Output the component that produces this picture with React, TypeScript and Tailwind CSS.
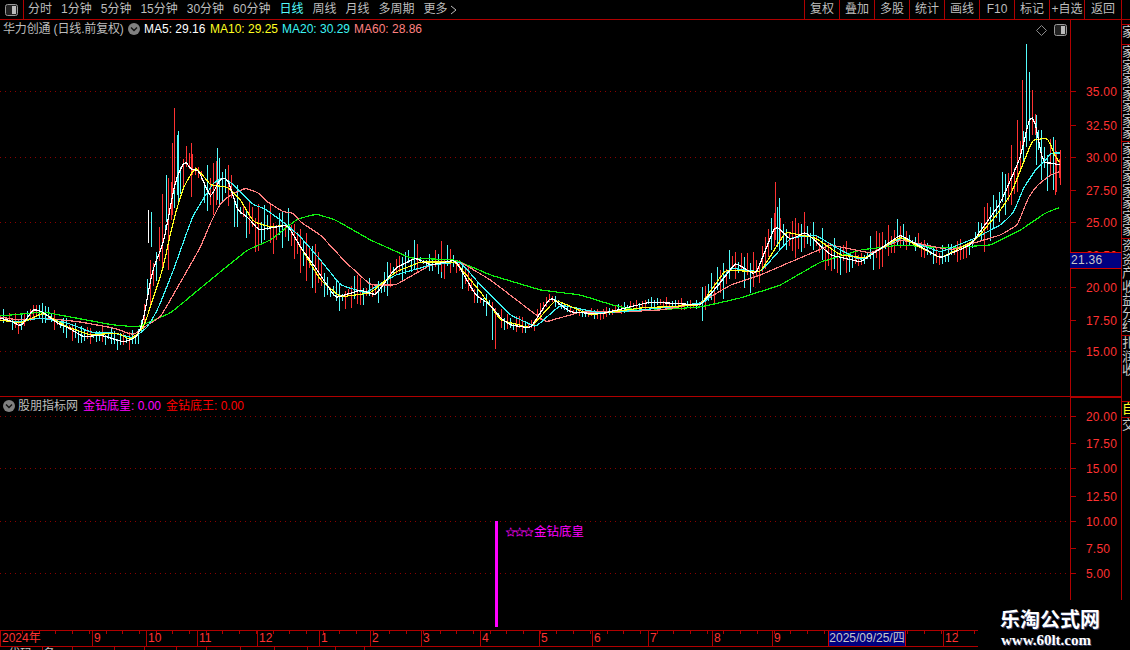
import React from 'react';

const FONT = 'font-["Liberation_Sans","Noto_Sans_CJK_SC",sans-serif]';

type Pt = [number, number];

const WHITE: Pt[] = [[0,318],[13,322],[20,327],[33,309],[42,312],[57,323],[70,329],[83,337],[100,335],[123,342],[137,337],[143,320],[150,280],[152,270],[163,243],[175,180],[185,159],[190,170],[198,170],[210,198],[220,178],[227,178],[237,210],[248,218],[258,230],[287,225],[300,247],[318,272],[335,298],[360,290],[375,295],[395,268],[415,258],[430,265],[455,260],[475,295],[490,305],[500,318],[510,325],[530,328],[550,297],[570,312],[600,314],[650,302],[700,305],[718,285],[735,263],[755,275],[775,225],[790,240],[805,232],[830,255],[860,262],[900,235],[940,258],[970,245],[1000,203],[1010,180],[1020,157],[1030,113],[1035,123],[1042,163],[1050,163],[1060,165]];
const YELLOW: Pt[] = [[0,320],[20,323],[43,313],[67,327],[90,335],[117,333],[130,340],[143,328],[152,300],[162,270],[173,220],[183,187],[195,167],[202,175],[210,185],[227,187],[240,200],[253,222],[270,227],[287,225],[300,247],[320,280],[340,297],[370,293],[395,272],[420,262],[455,262],[480,292],[500,320],[530,328],[555,300],[590,315],[640,308],[700,305],[725,270],[760,272],[785,232],[815,238],[840,255],[865,258],[900,237],[940,258],[975,240],[1000,210],[1010,195],[1020,170],[1032,140],[1048,138],[1053,153],[1060,165]];
const CYAN: Pt[] = [[0,320],[17,322],[40,318],[67,323],[93,333],[113,333],[133,338],[147,327],[157,310],[173,270],[180,250],[192,217],[202,200],[213,183],[223,177],[233,185],[243,195],[253,205],[263,208],[280,220],[290,228],[300,237],[320,260],[340,285],[365,293],[395,275],[430,265],[460,262],[480,285],[510,315],[535,327],[560,305],[600,313],[640,310],[680,306],[705,302],[730,268],[760,272],[790,238],[815,235],[840,250],[860,260],[900,238],[940,252],[975,238],[1000,225],[1013,213],[1023,188],[1037,167],[1043,163],[1050,153],[1060,153]];
const PINK: Pt[] = [[0,317],[17,320],[43,318],[80,322],[113,328],[133,335],[147,325],[160,317],[187,270],[200,247],[210,223],[220,203],[230,195],[245,188],[258,193],[267,202],[283,212],[293,213],[300,222],[320,235],[345,262],[370,285],[395,285],[430,265],[460,262],[490,280],[520,303],[545,322],[580,312],[620,312],[660,310],[700,303],[730,285],[760,275],[790,262],[830,245],[870,253],[900,240],[950,250],[1000,235],[1017,225],[1028,197],[1037,185],[1050,175],[1060,171]];
const GREEN: Pt[] = [[0,316],[43,312],[113,325],[137,327],[170,313],[222,270],[247,250],[270,240],[297,219],[316,214],[335,220],[370,240],[410,258],[455,260],[490,275],[540,290],[580,295],[612,305],[640,311],[700,307],[740,298],[780,285],[820,262],[860,250],[900,245],[945,248],[990,245],[1020,230],[1045,213],[1060,207]];

// hand-read wicks that stick out of the generated ones
const SPIKES: [number, number, number, string][] = [
  [174,108,190,'#ff3232'],[178,131,205,'#54fcfc'],[172,143,215,'#ff3232'],[177,135,190,'#54fcfc'],
  [166,175,222,'#54fcfc'],[168,178,270,'#ff3232'],[162,194,270,'#ff3232'],[148,210,243,'#ffffff'],
  [151,212,247,'#54fcfc'],[191,143,197,'#ff3232'],[217,148,200,'#54fcfc'],[219,158,205,'#54fcfc'],
  [213,163,215,'#ff3232'],[1026,44,120,'#54fcfc'],[1022,80,150,'#ff3232'],[1029,72,135,'#54fcfc'],
  [1017,120,190,'#ff3232'],[775,182,240,'#ff3232'],[779,198,250,'#54fcfc'],[495,310,349,'#ff3232'],
  [492,308,340,'#54fcfc'],[1011,145,200,'#ff3232'],[1036,115,165,'#54fcfc'],[1041,130,180,'#54fcfc'],
  [1060,150,185,'#ff3232'],[1055,140,195,'#ff3232'],[414,240,270,'#54fcfc'],[441,241,272,'#ff3232'],
];

function sample(points: Pt[]) {
  const raw: Pt[] = [];
  let i = 0;
  for (let x = 0; x <= 1060; x += 3) {
    while (i < points.length - 2 && points[i + 1][0] < x) i++;
    const [x0, y0] = points[i];
    const [x1, y1] = points[i + 1];
    raw.push([x, y0 + ((y1 - y0) * (x - x0)) / (x1 - x0)]);
  }
  return raw.map(([x, y], k) => {
    const a = raw[Math.max(k - 1, 0)][1];
    const b = raw[Math.min(k + 1, raw.length - 1)][1];
    return [x, (a + y * 4 + b) / 6] as Pt;
  });
}

function toPath(points: Pt[]) {
  return sample(points).map(([x, y]) => `${x + 0.5},${y.toFixed(1)}`).join(' ');
}

function makeCandles() {
  let seed = 20240901;
  const rnd = () => {
    seed = (seed * 1664525 + 1013904223) % 4294967296;
    return seed / 4294967296;
  };
  const centre = sample(WHITE);
  return centre.map(([x, y]) => {
    let amp = 10;
    if (x > 145 && x < 320) amp = 26;
    else if (x > 320 && x < 490) amp = 16;
    else if (x > 540 && x < 700) amp = 5;
    else if (x > 700 && x < 900) amp = 20;
    else if (x >= 900 && x < 980) amp = 12;
    else if (x >= 980) amp = 28;
    const up = rnd() > 0.48;
    return {
      x,
      y1: y - amp * rnd() - 1,
      y2: y + amp * rnd() + 1,
      color: up ? '#ff3232' : '#54fcfc',
    };
  });
}

const CANDLES = makeCandles();

const UPPER_TICKS = [
  { y: 91, label: '35.00' }, { y: 125, label: '32.50' }, { y: 157, label: '30.00' }, { y: 190, label: '27.50' },
  { y: 222, label: '25.00' }, { y: 255, label: '22.50' }, { y: 287, label: '20.00' }, { y: 320, label: '17.50' }, { y: 351, label: '15.00' },
];
const LOWER_TICKS = [
  { y: 416, label: '20.00' }, { y: 443, label: '17.50' }, { y: 468, label: '15.00' }, { y: 496, label: '12.50' },
  { y: 521, label: '10.00' }, { y: 548, label: '7.50' }, { y: 573, label: '5.00' },
];
const MONTHS = [
  { x: 1, label: '2024年' }, { x: 93, label: '9' }, { x: 147, label: '10' }, { x: 198, label: '11' }, { x: 258, label: '12' },
  { x: 320, label: '1' }, { x: 371, label: '2' }, { x: 422, label: '3' }, { x: 481, label: '4' }, { x: 540, label: '5' },
  { x: 593, label: '6' }, { x: 649, label: '7' }, { x: 713, label: '8' }, { x: 773, label: '9' }, { x: 944, label: '12' },
];
const MINOR_TICKS = Array.from({ length: 58 }, (_, i) => 22 + i * 16.7);
const LEFT_TABS = ['分时', '1分钟', '5分钟', '15分钟', '30分钟', '60分钟', '日线', '周线', '月线', '多周期'];
const RIGHT_TABS = ['复权', '叠加', '多股', '统计', '画线', 'F10', '标记', '+自选'];
const STRIP = [
  { h: 'h-[5px]', text: '' },
  { h: 'h-[20px]', text: '家' },
  { h: 'h-[97px]', text: '家家家家家家家' },
  { h: 'h-[97px]', text: '家家家家家家家' },
  { h: 'h-[97px]', text: '资资产收益分红' },
  { h: 'h-[66px]', text: '扎润收' },
];

function PanelIcon() {
  return (
    <svg width="13" height="12" viewBox="0 0 13 12">
      <rect x="0.5" y="0.5" width="12" height="11" rx="2" fill="#222" stroke="#999" />
      <rect x="7" y="2" width="4" height="8" fill="#bbb" />
    </svg>
  );
}

function ChevronDot() {
  return (
    <svg width="12" height="12" viewBox="0 0 12 12" className="shrink-0">
      <circle cx="6" cy="6" r="6" fill="#808080" />
      <path d="M3 4.5 L6 7.5 L9 4.5" fill="none" stroke="#111" strokeWidth="1.4" />
    </svg>
  );
}

function Axis({ ticks, top }: { ticks: { y: number; label: string }[]; top: number }) {
  return (
    <div className="relative w-[52px] h-full border-l border-r border-[#b00000] shrink-0">
      {ticks.map((t) => (
        <div key={t.label} className="absolute left-0 flex items-center h-[14px]" style={{ top: t.y - top - 7 }}>
          <div className="w-[5px] h-px bg-[#b00000]" />
          <span className="ml-[10px] mt-[2px] text-[12px] leading-[14px] tracking-[0.2px] text-[#ff3232]">{t.label}</span>
        </div>
      ))}
    </div>
  );
}

function GridLines({ ys }: { ys: number[] }) {
  return (
    <>
      {ys.map((y) => (
        <line key={y} x1="0" x2="1071" y1={y + 0.5} y2={y + 0.5} stroke="#8c0000" strokeDasharray="1 4" />
      ))}
    </>
  );
}

function UpperChart() {
  return (
    <svg width="1070" height="376" viewBox="0 20 1070 376" shapeRendering="crispEdges" className="block">
      <GridLines ys={[91, 157, 222, 287, 351]} />
      {CANDLES.map((c) => (
        <line key={c.x} x1={c.x + 0.5} x2={c.x + 0.5} y1={c.y1} y2={c.y2} stroke={c.color} />
      ))}
      {SPIKES.map(([x, y1, y2, color]) => (
        <line key={x + '-' + y1} x1={x + 0.5} x2={x + 0.5} y1={y1} y2={y2} stroke={color} />
      ))}
      <polyline points={toPath(GREEN)} fill="none" stroke="#10f010" strokeWidth="1.2" />
      <polyline points={toPath(PINK)} fill="none" stroke="#ff8080" strokeWidth="1.2" />
      <polyline points={toPath(CYAN)} fill="none" stroke="#3cf4f4" strokeWidth="1.2" />
      <polyline points={toPath(YELLOW)} fill="none" stroke="#ffff20" strokeWidth="1.2" />
      <polyline points={toPath(WHITE)} fill="none" stroke="#ffffff" strokeWidth="1.2" />
    </svg>
  );
}

export default function App() {
  return (
    <div className={`${FONT} relative w-[1130px] h-[650px] bg-black overflow-hidden text-[12px] flex flex-col`}>
      {/* Toolbar */}
      <div className="h-[20px] border-b border-[#b00000] flex items-stretch shrink-0 text-[#bdbdbd] leading-[19px]">
        <div className="w-[24px] border-r border-[#b00000] flex items-center justify-center">
          <PanelIcon />
        </div>
        <div className="flex items-center gap-[9px] pl-[4px]">
          {LEFT_TABS.map((t) => (
            <span key={t} className={t === '日线' ? 'text-[#54fcfc]' : ''}>{t}</span>
          ))}
          <span className="flex items-center gap-[2px]">
            更多
            <svg width="7" height="10" viewBox="0 0 7 10"><path d="M1 1 L6 5 L1 9" fill="none" stroke="#bdbdbd" /></svg>
          </span>
        </div>
        <div className="ml-auto flex items-stretch">
          {RIGHT_TABS.map((t) => (
            <div key={t} className="w-[35px] border-l border-[#b00000] text-center whitespace-nowrap">{t}</div>
          ))}
          <div className="w-[38px] border-l border-r border-[#b00000] text-center mr-[8px]">返回</div>
        </div>
      </div>

      {/* Panels and the clipped strip on the right */}
      <div className="flex flex-1 min-h-0">
        <div className="w-[1122px] flex flex-col shrink-0">
          {/* Price panel */}
          <div className="h-[377px] border-b border-[#b00000] flex shrink-0">
            <div className="relative w-[1070px]">
              <UpperChart />
              <div className="absolute left-[3px] top-[1px] flex items-center h-[15px]">
                <span className="text-[#bdbdbd] w-[125px] whitespace-nowrap tracking-[-0.15px]">华力创通 (日线.前复权)</span>
                <ChevronDot />
                <span className="ml-[4px] text-white w-[66px] whitespace-nowrap">MA5: 29.16</span>
                <span className="text-[#ffff20] w-[72px] whitespace-nowrap">MA10: 29.25</span>
                <span className="text-[#3cf4f4] w-[72px] whitespace-nowrap">MA20: 30.29</span>
                <span className="text-[#ff8080] whitespace-nowrap">MA60: 28.86</span>
              </div>
              <div className="absolute right-[3px] top-[4px] flex items-center gap-[7px]">
                <svg width="11" height="11" viewBox="0 0 11 11"><path d="M5.5 0.5 L10.5 5.5 L5.5 10.5 L0.5 5.5 Z" fill="none" stroke="#8a8a8a" /></svg>
                <PanelIcon />
              </div>
            </div>
            <div className="relative">
              <Axis ticks={UPPER_TICKS} top={20} />
              <div className="absolute left-0 top-[232px] w-[51px] h-[17px] bg-[#000080] border-y border-[#d00000] text-[#c8c8c8] pl-px leading-[15px] tracking-[0.3px]">
                21.36
              </div>
            </div>
          </div>

          {/* Indicator panel */}
          <div className="h-[233px] flex shrink-0">
            <div className="relative w-[1070px]">
              <svg width="1070" height="233" viewBox="0 397 1070 233" shapeRendering="crispEdges" className="block">
                <GridLines ys={[416, 468, 521, 573]} />
                <rect x="495" y="521" width="3" height="106" fill="#ff00ff" />
              </svg>
              <div className="absolute left-[3px] top-[1px] flex items-center h-[15px] whitespace-nowrap">
                <ChevronDot />
                <span className="ml-[3px] w-[65px] text-[#bdbdbd]">股朋指标网</span>
                <span className="w-[83px] text-[#ff00ff]">金钻底皇: 0.00</span>
                <span className="text-[#ff0000]">金钻底王: 0.00</span>
              </div>
              <div className="absolute left-[506px] top-[128px] flex items-center text-[#ff00ff] text-[12.5px] leading-[15px] whitespace-nowrap">
                <span className="w-[28px] text-[11px] font-bold">✩✩✩</span>
                <span>金钻底皇</span>
              </div>
            </div>
            <div className="border-t border-[#b00000] h-full">
              <Axis ticks={LOWER_TICKS} top={398} />
            </div>
          </div>

          {/* Time axis */}
          <div className="relative h-[17px] w-[978px] border-y border-[#b00000] shrink-0 text-[#ff3232] leading-[15px]">
            {MINOR_TICKS.map((x) => (
              <div key={x} className="absolute top-0 w-px h-[3px] bg-[#b00000]" style={{ left: Math.round(x) }} />
            ))}
            {MONTHS.map((m) => (
              <div key={m.x} className="absolute top-0 h-[15px] border-l border-[#b00000] pl-[1px] whitespace-nowrap" style={{ left: m.x - 1 }}>
                {m.label}
              </div>
            ))}
            <div className="absolute left-[828px] top-0 w-[78px] h-[15px] bg-[#000080] border-x border-[#d00000] text-[#c8c8c8] whitespace-nowrap text-center">
              2025/09/25/四
            </div>
          </div>
        </div>

        <div className="w-[8px] flex flex-col overflow-hidden text-[#c8c8c8] text-[13px] leading-[13.5px]">
          {STRIP.map((s, i) => (
            <div key={i} className={`${s.h} shrink-0 border-b border-[#b00000] overflow-hidden whitespace-pre-line`}>
              {s.text.split('').join('\n')}
            </div>
          ))}
          <div className="h-[16px] shrink-0 border-b border-[#b00000] text-[#ffff20] overflow-hidden">自</div>
          <div className="flex-1 overflow-hidden">交</div>
        </div>
      </div>

      {/* Clipped status row under the time axis */}
      <div className="h-[3px] flex shrink-0 overflow-hidden text-[#c8c8c8] leading-[14px]">
        <div className="w-[43px] border-r border-[#b00000] pl-[8px]">代码</div>
        <div className="w-[30px] border-r border-[#b00000]">名</div>
        <div className="w-[42px] border-r border-[#b00000]" />
        <div className="w-[30px] border-r border-[#b00000]" />
        <div className="w-[32px] border-r border-[#b00000]" />
        <div className="w-[30px] border-r border-[#b00000]" />
        <div className="w-[34px] border-r border-[#b00000]" />
        <div className="w-[34px] border-r border-[#b00000]" />
        <div className="w-[33px] border-r border-[#b00000]" />
        <div className="w-[28px] border-r border-[#b00000]" />
        <div className="w-[29px] border-r border-[#b00000]" />
      </div>

      {/* Watermark */}
      <div className="absolute left-[978px] top-[600px] w-[152px] h-[50px] bg-black flex flex-col items-center pt-[8px] pr-[8px] text-white font-['Liberation_Serif','Noto_Sans_CJK_SC',serif] font-bold [text-shadow:1px_1px_0_#3a3f6a]">
        <div className="text-[20px] leading-[24px] whitespace-nowrap">乐淘公式网</div>
        <div className="text-[15px] leading-[16px] whitespace-nowrap pr-[8px]">www.60lt.com</div>
      </div>
    </div>
  );
}
